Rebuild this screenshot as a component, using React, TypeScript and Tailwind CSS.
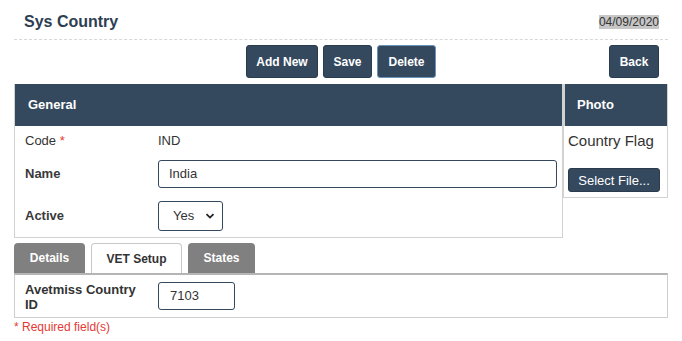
import React from "react";

const Btn = ({ children, className = "" }: { children: React.ReactNode; className?: string }) => (
  <button
    className={`h-[33px] rounded-[3px] bg-[#34495e] border border-[#2a3b4d] px-[9px] text-[12px] font-bold text-white leading-none ${className}`}
  >
    {children}
  </button>
);

export default function App() {
  return (
    <div className="w-[682px] h-[341px] bg-white px-[14px] font-['Liberation_Sans',Arial,sans-serif] text-[#333]">
      {/* title row */}
      <div className="h-[40px] flex items-center justify-between border-b border-dashed border-[#d8d8d8] pl-[10px] pr-[9px] pt-[4px]">
        <h1 className="text-[16px] font-bold text-[#2d3e52]">Sys Country</h1>
        <span className="text-[12px] leading-[14px] bg-[#c6c6c6] text-[#333]">04/09/2020</span>
      </div>

      {/* buttons */}
      <div className="mt-[5px] grid grid-cols-[1fr_auto_1fr] items-center">
        <div />
        <div className="flex gap-[5px]">
          <Btn className="w-[72px]">Add New</Btn>
          <Btn className="w-[49px]">Save</Btn>
          <Btn className="w-[59px] border-[#6b93b8]">Delete</Btn>
        </div>
        <div className="flex justify-end pr-[9px]">
          <Btn className="w-[50px]">Back</Btn>
        </div>
      </div>

      {/* panels */}
      <div className="mt-[6px] flex items-start">
        <div className="w-[549px] border border-[#d2d2d2] border-t-0">
          <div className="h-[42px] bg-[#34495e] flex items-center pl-[13px] text-[13px] font-bold text-white">General</div>
          <div className="pl-[10px] pb-[6px] text-[13px]">
            <div className="h-[30px] flex items-center">
              <div className="w-[133px]">
                Code <span className="text-[#e53935]">*</span>
              </div>
              <div>IND</div>
            </div>
            <div className="mt-[4px] flex items-center">
              <div className="w-[133px] font-bold text-[#3a3a3a]">Name</div>
              <div className="w-[399px] h-[28px] rounded-[3px] border border-[#34495e] flex items-center pl-[10px]">India</div>
            </div>
            <div className="mt-[13px] flex items-center">
              <div className="w-[133px] font-bold text-[#3a3a3a]">Active</div>
              <div className="w-[65px] h-[30px] rounded-[3px] border border-[#34495e] flex items-center pl-[14px] pr-[7px] justify-between">
                <span>Yes</span>
                <svg width="10" height="8" viewBox="0 0 10 8" fill="none">
                  <path d="M1.5 2.2 L5 5.6 L8.5 2.2" stroke="#222" strokeWidth="1.8" />
                </svg>
              </div>
            </div>
          </div>
        </div>
        <div className="w-[105px] border border-l-0 border-t-0 border-[#d2d2d2]">
          <div className="h-[42px] bg-[#34495e] border-l-2 border-[#d2d2d2] flex items-center pl-[12px] text-[13px] font-bold text-white">Photo</div>
          <div className="pl-[4px] pb-[5px] border-l border-[#d2d2d2]">
            <div className="h-[30px] flex items-center text-[15px]">Country Flag</div>
            <button className="mt-[12px] w-[92px] h-[24px] rounded-[3px] bg-[#34495e] border border-[#2a3b4d] text-white text-[13px] leading-none">
              Select File...
            </button>
          </div>
        </div>
      </div>

      {/* tabs */}
      <div className="mt-[5px] flex gap-[6px] h-[30px] items-end">
        <div className="w-[71px] h-[30px] rounded-t-[4px] bg-[#808080] text-white text-[12px] font-bold flex items-center justify-center">Details</div>
        <div className="w-[91px] h-[30px] rounded-t-[4px] bg-white border border-b-0 border-[#c8c8c8] text-[#333] text-[12px] font-bold flex items-center justify-center">VET Setup</div>
        <div className="w-[67px] h-[30px] rounded-t-[4px] bg-[#808080] text-white text-[12px] font-bold flex items-center justify-center">States</div>
      </div>
      <div className="h-[45px] border-[#cfcfcf] border-t-[2px] border-t-[#b5b5b5] border-x border-b flex items-center pl-[10px]">
        <div className="w-[133px] text-[13px] font-bold leading-[15px] text-[#333] pt-[1px]">
          Avetmiss Country
          <br />
          ID
        </div>
        <div className="w-[77px] h-[28px] rounded-[3px] border border-[#34495e] flex items-center pl-[11px] text-[13px]">7103</div>
      </div>
      <div className="mt-0 text-[12px] text-[#e53935]">* Required field(s)</div>
    </div>
  );
}
